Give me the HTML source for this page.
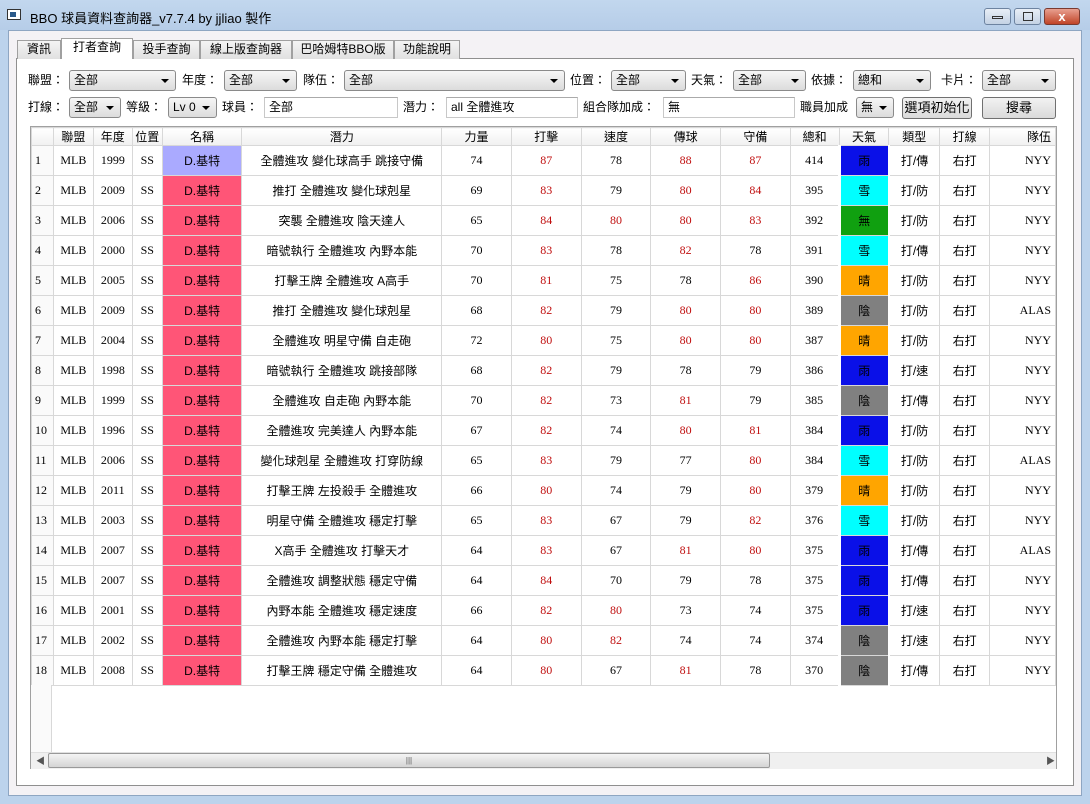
<!DOCTYPE html>
<html><head><meta charset="utf-8"><style>
*{box-sizing:border-box;margin:0;padding:0}
body{width:1090px;height:804px;overflow:hidden;background:#bcd3ec;font-family:"Liberation Sans","Noto Sans CJK TC",sans-serif;font-size:12px;color:#000;position:relative}
.a{position:absolute}
#title{left:0;top:0;width:1090px;height:30px;background:linear-gradient(#c2d7ee,#b6cde8)}
#client{left:8px;top:30px;width:1074px;height:766px;background:#f4f2f5;border:1px solid #8ea6c2}
.tab{top:40px;height:19px;border:1px solid #a0a0a0;border-bottom:none;background:linear-gradient(#f4f4f4,#e0e0e0);text-align:center;line-height:17px;font-size:12px}
#panel{left:16px;top:58px;width:1058px;height:728px;background:#fff;border:1px solid #8f8f8f}
.lbl{font-size:12px;line-height:20px}
.cb{height:21px;border:1px solid #8a8a8a;border-radius:3px;background:linear-gradient(#f6f6f6,#dcdcdc);line-height:19px;padding-left:4px;font-size:12px}
.cb:after{content:"";position:absolute;right:6px;top:8px;border-left:4px solid transparent;border-right:4px solid transparent;border-top:4px solid #000}
.tb{height:21px;border:1px solid #c8c8c8;border-top-color:#aaa;background:#fff;line-height:19px;padding-left:4px;font-size:12px}
.btn{height:22px;border:1px solid #707070;border-radius:3px;background:linear-gradient(#f2f2f2,#dadada);text-align:center;line-height:20px;font-size:13px}
#grid{left:30px;top:126px;width:1027px;height:643px;border:1px solid #a0a0a0;background:#fff;overflow:hidden}
table{border-collapse:collapse;table-layout:fixed;font-family:"Liberation Serif","Noto Serif CJK TC",serif;font-size:12px}
td,th{border:1px solid #d8d8d8;text-align:center;white-space:nowrap;overflow:hidden}
th{height:18px;font-weight:normal;background:linear-gradient(#fff,#f0f0f0);font-family:"Liberation Sans","Noto Sans CJK TC",sans-serif}
td{height:30px}
td.rh{text-align:left;padding-left:3px;background:#fafafa}
.n{background:#ff5577;font-family:"Liberation Sans","Noto Sans CJK TC",sans-serif}
.p{font-family:"Liberation Sans","Noto Sans CJK TC",sans-serif}
.r{color:#c01010}
.w{background-clip:padding-box;border-left:3px solid #fff;border-right:2px solid #fff}
td.tm{text-align:right;padding-right:4px}
</style></head><body>
<div class="a" id="title"></div>
<div class="a" style="left:7px;top:9px;width:14px;height:11px;border:1px solid #333;background:#fff"><div style="margin:2px;width:6px;height:5px;background:#2a5a8a"></div></div>
<div class="a" style="left:30px;top:8px;font-size:13px;color:#000">BBO 球員資料查詢器_v7.7.4 by jjliao 製作</div>
<div class="a" style="left:984px;top:8px;width:27px;height:17px;border:1px solid #6d83a0;border-radius:3px;background:linear-gradient(#e8eef6,#c4d2e4)"><div style="margin:7px auto;width:11px;height:3px;border:1px solid #333"></div></div>
<div class="a" style="left:1014px;top:8px;width:27px;height:17px;border:1px solid #6d83a0;border-radius:3px;background:linear-gradient(#e8eef6,#c4d2e4)"><div style="margin:3px auto;width:10px;height:9px;border:1px solid #333"></div></div>
<div class="a" style="left:1044px;top:8px;width:36px;height:17px;border:1px solid #7a3a30;border-radius:3px;background:linear-gradient(#e8a090,#c04428);color:#fff;text-align:center;font-weight:bold;line-height:15px;font-size:13px">x</div>
<div class="a" id="client"></div>
<div class="a" id="panel"></div>
<div class="a tab" style="left:17px;width:44px">資訊</div>
<div class="a tab" style="left:61px;width:72px;top:38px;height:21px;background:#fff">打者查詢</div>
<div class="a tab" style="left:133px;width:67px">投手查詢</div>
<div class="a tab" style="left:200px;width:92px">線上版查詢器</div>
<div class="a tab" style="left:292px;width:102px">巴哈姆特BBO版</div>
<div class="a tab" style="left:394px;width:66px">功能說明</div>

<div class="a lbl" style="left:28px;top:70px">聯盟：</div>
<div class="a cb" style="left:69px;top:70px;width:107px">全部</div>
<div class="a lbl" style="left:182px;top:70px">年度：</div>
<div class="a cb" style="left:224px;top:70px;width:73px">全部</div>
<div class="a lbl" style="left:303px;top:70px">隊伍：</div>
<div class="a cb" style="left:344px;top:70px;width:221px">全部</div>
<div class="a lbl" style="left:570px;top:70px">位置：</div>
<div class="a cb" style="left:611px;top:70px;width:75px">全部</div>
<div class="a lbl" style="left:691px;top:70px">天氣：</div>
<div class="a cb" style="left:733px;top:70px;width:73px">全部</div>
<div class="a lbl" style="left:811px;top:70px">依據：</div>
<div class="a cb" style="left:853px;top:70px;width:78px">總和</div>
<div class="a lbl" style="left:941px;top:70px">卡片：</div>
<div class="a cb" style="left:982px;top:70px;width:74px">全部</div>

<div class="a lbl" style="left:28px;top:97px">打線：</div>
<div class="a cb" style="left:69px;top:97px;width:52px">全部</div>
<div class="a lbl" style="left:126px;top:97px">等級：</div>
<div class="a cb" style="left:168px;top:97px;width:49px">Lv 0</div>
<div class="a lbl" style="left:222px;top:97px">球員：</div>
<div class="a tb" style="left:264px;top:97px;width:134px">全部</div>
<div class="a lbl" style="left:403px;top:97px">潛力：</div>
<div class="a tb" style="left:446px;top:97px;width:132px">all 全體進攻</div>
<div class="a lbl" style="left:583px;top:97px">組合隊加成：</div>
<div class="a tb" style="left:663px;top:97px;width:132px">無</div>
<div class="a lbl" style="left:800px;top:97px">職員加成</div>
<div class="a cb" style="left:856px;top:97px;width:38px">無</div>
<div class="a btn" style="left:902px;top:97px;width:70px">選項初始化</div>
<div class="a btn" style="left:982px;top:97px;width:74px">搜尋</div>

<div class="a" id="grid">
<table id="t">
<colgroup><col style="width:22px"><col style="width:40px"><col style="width:39px"><col style="width:30px"><col style="width:80px"><col style="width:200px"><col style="width:70px"><col style="width:70px"><col style="width:70px"><col style="width:70px"><col style="width:70px"><col style="width:49px"><col style="width:50px"><col style="width:51px"><col style="width:50px"><col style="width:66px"></colgroup>
<tr><th></th><th>聯盟</th><th>年度</th><th>位置</th><th>名稱</th><th>潛力</th><th>力量</th><th>打擊</th><th>速度</th><th>傳球</th><th>守備</th><th>總和</th><th>天氣</th><th>類型</th><th>打線</th><th style="text-align:right;padding-right:4px">隊伍</th></tr>
<tbody id="b"></tbody>
</table>
</div>
<div class="a" style="left:31px;top:685px;width:21px;height:67px;background:#fafafa;border-right:1px solid #d8d8d8"></div>
<div class="a" style="left:31px;top:752px;width:1025px;height:17px;background:#f0f0f0;border-top:1px solid #e0e0e0"></div>
<div class="a" style="left:36px;top:754px;font-size:9px;color:#555">◀</div>
<div class="a" style="left:1046px;top:754px;font-size:9px;color:#555">▶</div>
<div class="a" style="left:48px;top:753px;width:722px;height:15px;border:1px solid #999;border-radius:2px;background:linear-gradient(#f4f4f4,#d4d4d4);text-align:center;font-size:8px;line-height:13px;color:#555">|||</div>
<script>
var d=[
[1999,"全體進攻 變化球高手 跳接守備",74,87,78,88,87,414,"雨","打/傳","NYY"],
[2009,"推打 全體進攻 變化球剋星",69,83,79,80,84,395,"雪","打/防","NYY"],
[2006,"突襲 全體進攻 陰天達人",65,84,80,80,83,392,"無","打/防","NYY"],
[2000,"暗號執行 全體進攻 內野本能",70,83,78,82,78,391,"雪","打/傳","NYY"],
[2005,"打擊王牌 全體進攻 A高手",70,81,75,78,86,390,"晴","打/防","NYY"],
[2009,"推打 全體進攻 變化球剋星",68,82,79,80,80,389,"陰","打/防","ALAS"],
[2004,"全體進攻 明星守備 自走砲",72,80,75,80,80,387,"晴","打/防","NYY"],
[1998,"暗號執行 全體進攻 跳接部隊",68,82,79,78,79,386,"雨","打/速","NYY"],
[1999,"全體進攻 自走砲 內野本能",70,82,73,81,79,385,"陰","打/傳","NYY"],
[1996,"全體進攻 完美達人 內野本能",67,82,74,80,81,384,"雨","打/防","NYY"],
[2006,"變化球剋星 全體進攻 打穿防線",65,83,79,77,80,384,"雪","打/防","ALAS"],
[2011,"打擊王牌 左投殺手 全體進攻",66,80,74,79,80,379,"晴","打/防","NYY"],
[2003,"明星守備 全體進攻 穩定打擊",65,83,67,79,82,376,"雪","打/防","NYY"],
[2007,"X高手 全體進攻 打擊天才",64,83,67,81,80,375,"雨","打/傳","ALAS"],
[2007,"全體進攻 調整狀態 穩定守備",64,84,70,79,78,375,"雨","打/傳","NYY"],
[2001,"內野本能 全體進攻 穩定速度",66,82,80,73,74,375,"雨","打/速","NYY"],
[2002,"全體進攻 內野本能 穩定打擊",64,80,82,74,74,374,"陰","打/速","NYY"],
[2008,"打擊王牌 穩定守備 全體進攻",64,80,67,81,78,370,"陰","打/傳","NYY"]];
var wc={"雨":"#0a10e8","雪":"#00ffff","無":"#10a010","晴":"#ffa500","陰":"#808080"};
var h="";
d.forEach(function(r,i){
 function s(v){return '<td'+(v>=80?' class="r"':'')+'>'+v+'</td>';}
 h+='<tr><td class="rh">'+(i+1)+'</td><td>MLB</td><td>'+r[0]+'</td><td>SS</td><td class="n"'+(i==0?' style="background:#aaaaff"':'')+'>D.基特</td><td class="p">'+r[1]+'</td><td>'+r[2]+'</td>'+s(r[3])+s(r[4])+s(r[5])+s(r[6])+'<td>'+r[7]+'</td><td class="w p" style="background:'+wc[r[8]]+'">'+r[8]+'</td><td class="p">'+r[9]+'</td><td class="p">右打</td><td class="tm">'+r[10]+'</td></tr>';
});
document.getElementById("b").innerHTML=h;
</script>
</body></html>
